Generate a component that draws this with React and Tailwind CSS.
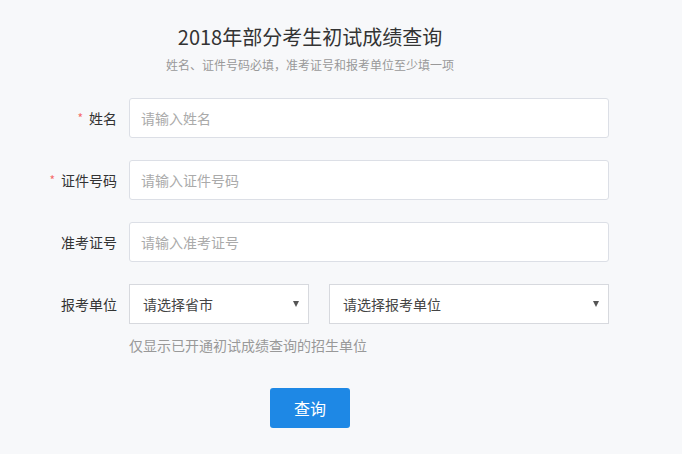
const font = { fontFamily: '"Noto Sans CJK SC", "Liberation Sans", sans-serif' };

const Field = ({ label, required, children }) => (
    <div className="flex items-center h-10">
        <div className="w-[117px] flex justify-end items-center text-sm text-[#333]">
            {required && <span className="text-[#f56c6c] mr-[6px] text-xs">*</span>}
            {label}
        </div>
        {children}
    </div>
);

const Input = ({ placeholder }) => (
    <div className="w-[480px] h-10 ml-[12px] bg-white border border-[#dcdfe6] rounded-[3px] flex items-center px-[11px] text-sm text-[#aaa]">
        {placeholder}
    </div>
);

const Select = ({ text, width }) => (
    <div className={`${width} h-10 bg-white border border-[#d7d9de] flex items-center justify-between pl-[13px] pr-[8px] text-sm text-[#444]`}>
        <span>{text}</span>
        <span className="w-0 h-0 border-l-[3px] border-r-[3px] border-t-[6px] border-l-transparent border-r-transparent border-t-[#555] mr-[1px]"></span>
    </div>
);

export default function App() {
    return (
        <div className="w-[682px] h-[454px] bg-[#f7f8fa] pt-[22px]" style={font}>
            <div className="w-[620px] text-center">
                <h1 className="text-[20px] leading-[30px] text-[#333]">2018年部分考生初试成绩查询</h1>
                <p className="text-xs text-[#999] mt-[5px]">姓名、证件号码必填，准考证号和报考单位至少填一项</p>
            </div>

            <div className="mt-[25px] flex flex-col gap-[22px]">
                <Field label="姓名" required>
                    <Input placeholder="请输入姓名" />
                </Field>
                <Field label="证件号码" required>
                    <Input placeholder="请输入证件号码" />
                </Field>
                <Field label="准考证号">
                    <Input placeholder="请输入准考证号" />
                </Field>
                <div>
                    <Field label="报考单位">
                        <div className="ml-[12px] flex gap-5">
                            <Select text="请选择省市" width="w-[180px]" />
                            <Select text="请选择报考单位" width="w-[280px]" />
                        </div>
                    </Field>
                    <p className="ml-[129px] mt-[11px] text-sm text-[#999]">仅显示已开通初试成绩查询的招生单位</p>
                </div>
            </div>

            <div className="mt-[33px] pl-[270px]">
                <button className="w-20 h-10 bg-[#1e88e5] text-white text-base rounded-[3px]">查询</button>
            </div>
        </div>
    );
}
